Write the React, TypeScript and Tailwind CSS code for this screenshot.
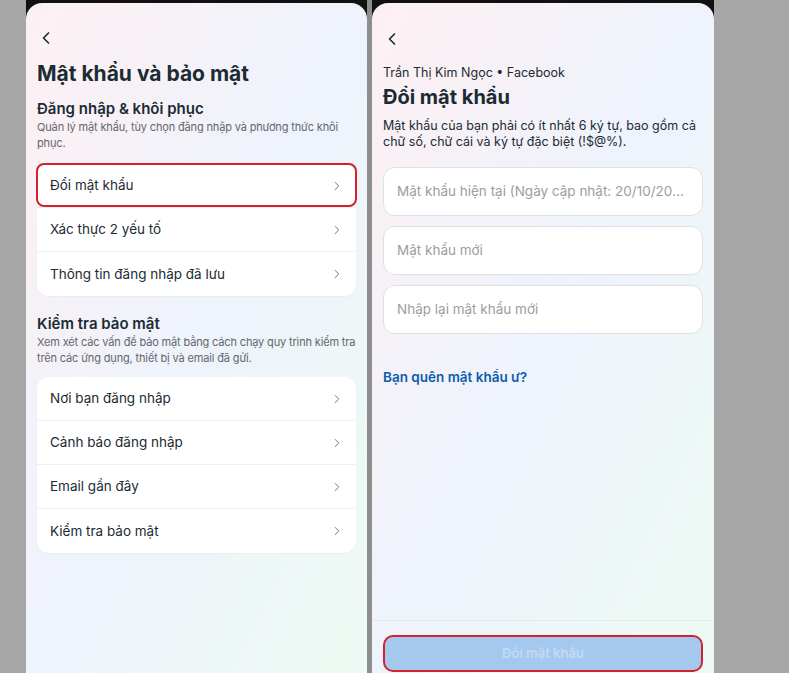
import { ChevronLeft, ChevronRight } from "lucide-react";

const font = { fontFamily: "Inter, 'Noto Sans', sans-serif" };

function Row({ label, outlined, last }: { label: string; outlined?: boolean; last?: boolean }) {
  return (
    <div
      className={`relative flex h-[44px] items-center justify-between pl-[13px] pr-[12px] ${
        last ? "" : "border-b border-[#eef0f2]"
      }`}
    >
      <span className="text-[13.5px] text-[#1c2b33]">{label}</span>
      <ChevronRight className="h-[14px] w-[14px] text-[#65676b]" strokeWidth={1.6} />
      {outlined && (
        <span className="absolute -inset-x-[1px] -top-[1px] bottom-0 rounded-[8px] border-2 border-[#d3222e]" />
      )}
    </div>
  );
}

function Card({ rows, outlineFirst }: { rows: string[]; outlineFirst?: boolean }) {
  return (
    <div className="rounded-[12px] bg-white shadow-[0_1px_2px_rgba(0,0,0,0.04)]">
      {rows.map((r, i) => (
        <Row key={r} label={r} outlined={outlineFirst && i === 0} last={i === rows.length - 1} />
      ))}
    </div>
  );
}

function Phone({ width, children }: { width: string; children: React.ReactNode }) {
  return (
    <div className={`${width} flex h-full flex-col bg-[#111]`}>
      <div className="mt-[3px] flex-1 overflow-hidden rounded-t-[16px] bg-gradient-to-br from-[#fdf0f3] via-[#eef3fc] to-[#eefaf3]">
        {children}
      </div>
    </div>
  );
}

function SecurityScreen() {
  return (
    <div className="flex flex-col px-[11px] pt-[25px]">
      <ChevronLeft className="ml-[-1px] h-[20px] w-[20px] text-[#1c2b33]" strokeWidth={2} />
      <h1 className="mt-[13px] text-[21px] font-bold leading-[26px] text-[#1c2b33]">Mật khẩu và bảo mật</h1>
      <h2 className="mt-[12px] text-[15px] font-semibold leading-[20px] text-[#1c2b33]">Đăng nhập &amp; khôi phục</h2>
      <p className="text-[11px] leading-[16px] tracking-[-0.15px] text-[#65676b]">
        Quản lý mật khẩu, tùy chọn đăng nhập và phương thức khôi phục.
      </p>
      <div className="mt-[13px]">
        <Card outlineFirst rows={["Đổi mật khẩu", "Xác thực 2 yếu tố", "Thông tin đăng nhập đã lưu"]} />
      </div>
      <h2 className="mt-[18px] text-[15px] font-semibold leading-[20px] text-[#1c2b33]">Kiểm tra bảo mật</h2>
      <p className="text-[11px] leading-[16px] tracking-[-0.15px] text-[#65676b]">
        Xem xét các vấn đề bảo mật bằng cách chạy quy trình kiểm tra trên các ứng dụng, thiết bị và email đã gửi.
      </p>
      <div className="mt-[11px]">
        <Card rows={["Nơi bạn đăng nhập", "Cảnh báo đăng nhập", "Email gần đây", "Kiểm tra bảo mật"]} />
      </div>
    </div>
  );
}

function Field({ placeholder }: { placeholder: string }) {
  return (
    <div className="flex h-[49px] items-center rounded-[12px] border border-[#dde1e6] bg-white px-[13px]">
      <span className="truncate text-[13.5px] text-[#9a9ea3]">{placeholder}</span>
    </div>
  );
}

function PasswordScreen() {
  return (
    <div className="flex h-full flex-col">
      <div className="flex flex-1 flex-col px-[11px] pt-[26px]">
        <ChevronLeft className="ml-[-1px] h-[20px] w-[20px] text-[#1c2b33]" strokeWidth={2} />
        <div className="mt-[15px] text-[12.5px] leading-[18px] text-[#1c2b33]">Trần Thị Kim Ngọc • Facebook</div>
        <h1 className="mt-[2px] text-[20px] font-bold leading-[26px] text-[#1c2b33]">Đổi mật khẩu</h1>
        <p className="mt-[8px] text-[12.5px] leading-[16px] text-[#1c2b33]">
          Mật khẩu của bạn phải có ít nhất 6 ký tự, bao gồm cả chữ số, chữ cái và ký tự đặc biệt (!$@%).
        </p>
        <div className="mt-[17px] flex flex-col gap-[10px]">
          <Field placeholder="Mật khẩu hiện tại (Ngày cập nhật: 20/10/2023)" />
          <Field placeholder="Mật khẩu mới" />
          <Field placeholder="Nhập lại mật khẩu mới" />
        </div>
        <div className="mt-[33px] text-[13.5px] font-semibold text-[#0b5cad]">Bạn quên mật khẩu ư?</div>
      </div>
      <div className="h-[53px] border-t border-[#e4ece8] px-[11px] pt-[14px]">
        <div className="flex h-[37px] items-center justify-center rounded-[10px] border-2 border-[#d3222e] bg-[#a5c8ee]">
          <span className="text-[13px] font-semibold text-[#c2dbf5]">Đổi mật khẩu</span>
        </div>
      </div>
    </div>
  );
}

export default function App() {
  return (
    <div className="flex h-[673px] w-[789px] bg-[#a6a6a6] pl-[26px]" style={font}>
      <Phone width="w-[341px]">
        <SecurityScreen />
      </Phone>
      <div className="w-[5px] bg-[#8e8e8e]" />
      <Phone width="w-[342px]">
        <PasswordScreen />
      </Phone>
    </div>
  );
}
